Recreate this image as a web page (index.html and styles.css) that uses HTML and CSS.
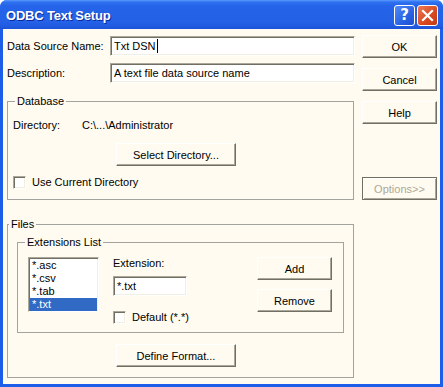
FILE: index.html
```html
<!DOCTYPE html>
<html>
<head>
<meta charset="utf-8">
<link rel="stylesheet" href="styles.css">
</head>
<body>
<div class="window">
  <div class="titlebar">
    <span class="title">ODBC Text Setup</span>
    <div class="caption-buttons">
      <span class="cap help">?</span>
      <span class="cap close"><svg width="13" height="13" viewBox="0 0 13 13"><path d="M2 2 L11 11 M11 2 L2 11" stroke="#fff" stroke-width="2.2" stroke-linecap="square"/></svg></span>
    </div>
  </div>
  <div class="client">
    <div class="main">
      <div class="field-row">
        <span class="lbl">Data Source Name:</span>
        <div class="edit wide-edit">Txt DSN<span class="caret"></span></div>
      </div>
      <div class="field-row row2">
        <span class="lbl">Description:</span>
        <div class="edit wide-edit">A text file data source name</div>
      </div>
      <fieldset class="group db">
        <legend>Database</legend>
        <div class="dir-row"><span class="dir-lbl">Directory:</span><span>C:\...\Administrator</span></div>
        <button class="btn wide select">Select Directory...</button>
        <div class="check-row"><span class="checkbox"></span><span>Use Current Directory</span></div>
      </fieldset>
      <fieldset class="group files">
        <legend>Files</legend>
        <fieldset class="group ext">
          <legend>Extensions List</legend>
          <div class="ext-body">
            <ul class="listbox">
              <li>*.asc</li>
              <li>*.csv</li>
              <li>*.tab</li>
              <li class="sel">*.txt</li>
            </ul>
            <div class="ext-mid">
              <span class="ext-lbl">Extension:</span>
              <div class="edit ext-edit">*.txt</div>
              <div class="check-row def"><span class="checkbox"></span><span>Default (*.*)</span></div>
            </div>
            <div class="ext-btns">
              <button class="btn">Add</button>
              <button class="btn remove">Remove</button>
            </div>
          </div>
        </fieldset>
        <button class="btn wide define">Define Format...</button>
      </fieldset>
    </div>
    <div class="side">
      <button class="btn">OK</button>
      <button class="btn gap">Cancel</button>
      <button class="btn gap">Help</button>
      <button class="btn options" disabled>Options&gt;&gt;</button>
    </div>
  </div>
</div>
</body>
</html>
```
FILE: styles.css
```css
* { box-sizing: border-box; }
html, body { margin: 0; padding: 0; background: #fff; }
body { font-family: "Liberation Sans", Arial, sans-serif; font-size: 11px; color: #000; }

.window {
  width: 443px;
  height: 387px;
  display: flex;
  flex-direction: column;
  background: #1d5ee9;
  border-radius: 7px 7px 0 0;
  overflow: hidden;
}

.titlebar {
  height: 29px;
  flex: none;
  display: flex;
  align-items: center;
  justify-content: space-between;
  padding: 1px 5px 0 6px;
  background: linear-gradient(to bottom, #5b9bfb 0px, #2f72f0 2px, #2563e8 6px, #2463e7 14px, #2461e6 22px, #1f59de 27px, #1b52d6 29px);
}
.title {
  color: #fff;
  font-weight: bold;
  font-size: 13px;
  letter-spacing: -0.2px;
  text-shadow: 1px 1px 0 #0c2a9c;
}
.caption-buttons { display: flex; gap: 2px; }
.cap {
  width: 21px;
  height: 21px;
  border: 1px solid #fff;
  border-radius: 3px;
  display: flex;
  align-items: center;
  justify-content: center;
  color: #fff;
}
.help {
  background: linear-gradient(to bottom right, #4f8cf7, #2a62e4 60%, #1d4fd0);
  font-family: "DejaVu Sans", sans-serif;
  font-weight: bold;
  font-size: 15px;
}
.close {
  background: linear-gradient(to bottom right, #ec7b56, #d9481f 60%, #c23a14);
}

.client {
  flex: 1;
  margin: 0 3px 3px;
  background: #fffbf0;
  display: flex;
}

.main {
  width: 348px;
  margin-left: 4px;
  padding-top: 7px;
}
.side {
  width: 75px;
  margin-left: 7px;
  padding-top: 6px;
  display: flex;
  flex-direction: column;
}

.field-row { display: flex; align-items: center; height: 20px; }
.row2 { margin-top: 7px; }
.lbl { width: 103px; line-height: 13px; }

.edit {
  height: 20px;
  background: #fff;
  border: 1px solid;
  border-color: #aca899 #fff #fff #aca899;
  box-shadow: inset 1px 1px 0 #716f64, inset -1px -1px 0 #f1efe2;
  padding: 0 3px;
  display: flex;
  align-items: center;
  line-height: 13px;
  white-space: nowrap;
}
.wide-edit { width: 245px; }
.caret {
  display: inline-block;
  width: 1px;
  height: 14px;
  background: #000;
  margin-left: 1px;
}

.btn {
  display: block;
  width: 75px;
  height: 23px;
  padding: 0;
  margin: 0;
  font: inherit;
  color: #000;
  background: #fffbf0;
  border: 1px solid;
  border-color: #fff #716f64 #716f64 #fff;
  box-shadow: inset -1px -1px 0 #aca899;
  text-align: center;
  line-height: 20px;
}
.side .gap { margin-top: 10px; }
.options {
  margin-top: 53px;
  color: #aca899;
  border-color: #716f64;
  box-shadow: inset 1px 1px 0 #fff, inset -1px -1px 0 #aca899;
}

.group {
  margin: 0;
  padding: 0;
  min-inline-size: 0;
  border: 1px solid #a3a3a0;
}
.group legend {
  padding: 0 2px;
  line-height: 13px;
}

.db {
  width: 347px;
  margin-top: 12px;
  padding: 0 5px 10px;
}
.db legend { margin-left: 2px; }
.dir-row { display: flex; line-height: 13px; margin-top: 11px; }
.dir-lbl { width: 69px; }
.select { width: 120px; margin: 11px 0 0 103px; }
.check-row { display: flex; align-items: center; gap: 6px; line-height: 13px; margin-top: 10px; }
.checkbox {
  width: 13px;
  height: 13px;
  flex: none;
  background: #fff;
  border: 1px solid;
  border-color: #aca899 #fff #fff #aca899;
  box-shadow: inset 1px 1px 0 #716f64, inset -1px -1px 0 #f1efe2;
}

.files {
  width: 347px;
  margin-top: 18px;
  padding: 0 0 10px;
}
.files legend { margin-left: 1px; }
.ext {
  margin: 5px 9px 0 9px;
  padding: 0 0 8px;
}
.ext legend { margin-left: 7px; }
.ext-body { display: flex; align-items: flex-start; padding-top: 8px; }
.listbox {
  list-style: none;
  margin: 0 0 0 10px;
  padding: 1px 0 0;
  width: 71px;
  height: 55px;
  background: #fff;
  border: 1px solid;
  border-color: #aca899 #fff #fff #aca899;
  box-shadow: inset 1px 1px 0 #716f64, inset -1px -1px 0 #f1efe2;
}
.listbox li {
  height: 13px;
  line-height: 13px;
  padding-left: 2px;
  margin: 0 1px 0 1px;
}
.listbox li.sel { background: #316ac5; color: #fff; }
.ext-mid { width: 74px; margin-left: 14px; display: flex; flex-direction: column; }
.ext-lbl { line-height: 13px; }
.ext-edit { width: 74px; margin-top: 6px; }
.def { margin-top: 15px; white-space: nowrap; }
.ext-btns { margin-left: 70px; }
.remove { margin-top: 9px; }
.define { width: 120px; margin: 11px 0 0 108px; }
```
